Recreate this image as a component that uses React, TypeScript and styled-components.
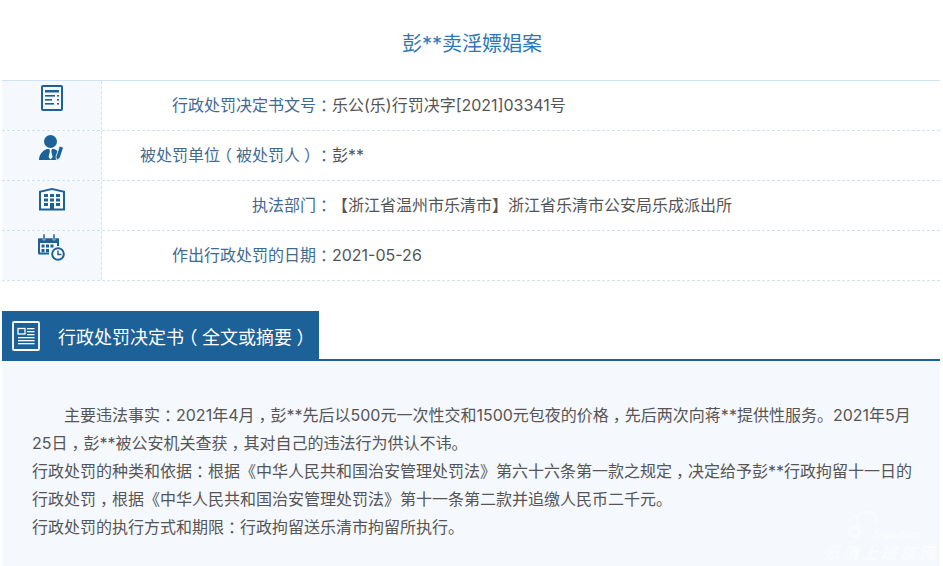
import React from "react";
import styled, { createGlobalStyle } from "styled-components";

const GlobalStyle = createGlobalStyle`
  html, body {
    margin: 0;
    padding: 0;
    background: #fff;
    overflow: hidden;
  }
  body {
    font-family: Inter, "Noto Sans CJK SC", sans-serif;
  }
`;

const BLUE = "#1d6199";

const DocIcon = () => (
  <svg width="22" height="26" viewBox="0 0 22 26">
    <rect x="1" y="1" width="20" height="24" rx="1" fill="none" stroke={BLUE} strokeWidth="2" />
    <rect x="4" y="5" width="14" height="2.5" fill={BLUE} />
    <rect x="4" y="10" width="10" height="1.6" fill={BLUE} />
    <rect x="16" y="10" width="2" height="1.6" fill={BLUE} />
    <rect x="4" y="14" width="7" height="1.6" fill={BLUE} />
    <rect x="16" y="14" width="2" height="1.6" fill={BLUE} />
    <rect x="4" y="18" width="9" height="1.6" fill={BLUE} />
    <rect x="16" y="18" width="2" height="1.6" fill={BLUE} />
  </svg>
);

const PersonIcon = () => (
  <svg width="25" height="26" viewBox="0 0 25 26">
    <circle cx="11.5" cy="6.500" r="6.500" fill={BLUE} />
    <path d="M0 25c0-5.500 3.500-9.500 8-11h7c2 .6 3.200 1.600 4 3l-2 8z" fill={BLUE} />
    <path d="M10.300 14h2.600l-.6 2.500 1.300 5.500-2 2.500-2-2.500 1.300-5.500z" fill="#fff" />
    <path d="M20.500 11l4 1.500-3.500 10.500-3.500 2.500-.5-3.800z" fill={BLUE} stroke="#f5f9fe" strokeWidth=".8" />
  </svg>
);

const BuildingIcon = () => (
  <svg width="26" height="23" viewBox="0 0 26 23">
    <path d="M0 22.500V3L13 0l13 3v19.500z" fill={BLUE} />
    <path d="M2 20.500V4.500L13 2l11 2.500v16z" fill="#fff" />
    <g fill={BLUE}>
      <rect x="5" y="6" width="4" height="3" />
      <rect x="11" y="6" width="4" height="3" />
      <rect x="17" y="6" width="4" height="3" />
      <rect x="5" y="10.500" width="4" height="3" />
      <rect x="11" y="10.500" width="4" height="3" />
      <rect x="17" y="10.500" width="4" height="3" />
      <rect x="5" y="15" width="4" height="3" />
      <rect x="11" y="15" width="4" height="7" />
      <rect x="17" y="15" width="4" height="3" />
    </g>
  </svg>
);

const CalendarIcon = () => (
  <svg width="27" height="27" viewBox="0 0 27 27">
    <path d="M1.500 4.500h18.500a1 1 0 0 1 1 1V12h-2V9H2v9.500h9v2H1.500a1.500 1.500 0 0 1-1.500-1.500V6a1.500 1.500 0 0 1 1.500-1.500z" fill={BLUE} />
    <rect x="0" y="4.500" width="21" height="4.500" fill={BLUE} />
    <rect x="5" y="0" width="2" height="6" fill={BLUE} stroke="#f5f9fe" strokeWidth=".5" />
    <rect x="15" y="0" width="2" height="6" fill={BLUE} stroke="#f5f9fe" strokeWidth=".5" />
    <g fill={BLUE}>
      <rect x="3.500" y="10.500" width="3" height="3" />
      <rect x="8" y="10.500" width="3" height="3" />
      <rect x="12.500" y="10.500" width="3" height="3" />
      <rect x="3.500" y="15" width="3" height="3" />
      <rect x="8" y="15" width="3" height="3" />
    </g>
    <circle cx="20" cy="20" r="5.800" fill="#fff" stroke={BLUE} strokeWidth="2" />
    <path d="M20 16.500V20.500h3.500" fill="none" stroke={BLUE} strokeWidth="1.500" />
  </svg>
);

const ArticleIcon = () => (
  <svg width="28" height="30" viewBox="0 0 28 30">
    <rect x="1" y="1" width="26" height="28" rx="1" fill="none" stroke="#fff" strokeWidth="1.800" />
    <rect x="6" y="7.500" width="7" height="5.500" fill="none" stroke="#fff" strokeWidth="1.300" />
    <g fill="#fff">
      <rect x="15" y="7" width="7.500" height="1.300" />
      <rect x="15" y="10" width="7.500" height="1.300" />
      <rect x="15" y="13" width="7.500" height="1.300" />
      <rect x="6" y="16" width="16.500" height="1.300" />
      <rect x="6" y="19" width="16.500" height="1.300" />
      <rect x="6" y="22" width="16.500" height="1.300" />
    </g>
  </svg>
);

const WatermarkLogo = () => (
  <svg width="44" height="32" viewBox="0 0 44 32" fill="none" stroke="#fff" strokeWidth="1.500" opacity=".6">
    <path d="M12 28c-7 0-9-5-5-8 4-3 9-2 9 2 0 4-4 6-4 6" strokeWidth="2.500" />
    <path d="M16 20c-5-5-5-14 3-17 8-2 14 3 14 11" />
    <path d="M14 12L6 2M11 13L2 8" strokeWidth="1" />
  </svg>
);

// 全角标点在原图里是居中的，单独包一层
const withPunct = (text: string) =>
  text.split(/([，：（）])/).map((part, i) =>
    i % 2 === 1 ? <Punct key={i}>{part}</Punct> : part
  );

const rows = [
  { icon: <DocIcon />, top: 4, label: "行政处罚决定书文号：", value: "乐公(乐)行罚决字[2021]03341号" },
  { icon: <PersonIcon />, top: 4, label: "被处罚单位（被处罚人）：", value: "彭**" },
  { icon: <BuildingIcon />, top: 7, label: "执法部门：", value: "【浙江省温州市乐清市】浙江省乐清市公安局乐成派出所" },
  { icon: <CalendarIcon />, top: 3, label: "作出行政处罚的日期：", value: "2021-05-26" },
];

export default function App() {
  return (
    <Page>
      <GlobalStyle />
      <Title>彭**卖淫嫖娼案</Title>
      <InfoTable>
        {rows.map((row, i) => (
          <InfoRow key={row.label} $first={i === 0}>
            <IconCell $top={row.top}>{row.icon}</IconCell>
            <Label>{withPunct(row.label)}</Label>
            <Value>{row.value}</Value>
          </InfoRow>
        ))}
      </InfoTable>
      <SectionBar>
        <SectionTab>
          <TabIcon>
            <ArticleIcon />
          </TabIcon>
          <TabTitle>{withPunct("行政处罚决定书（全文或摘要）")}</TabTitle>
        </SectionTab>
      </SectionBar>
      <Panel>
        <Lead>{withPunct("主要违法事实：2021年4月，彭**先后以500元一次性交和1500元包夜的价格，先后两次向蒋**提供性服务。2021年5月25日，彭**被公安机关查获，其对自己的违法行为供认不讳。")}</Lead>
        <Para>{withPunct("行政处罚的种类和依据：根据《中华人民共和国治安管理处罚法》第六十六条第一款之规定，决定给予彭**行政拘留十一日的行政处罚，根据《中华人民共和国治安管理处罚法》第十一条第二款并追缴人民币二千元。")}</Para>
        <Para>{withPunct("行政处罚的执行方式和期限：行政拘留送乐清市拘留所执行。")}</Para>
        <LogoMark>
          <WatermarkLogo />
          <LogoText>Sigu.com</LogoText>
        </LogoMark>
        <Watermark>乐清上班族网</Watermark>
      </Panel>
    </Page>
  );
}

const Page = styled.div`
  width: 943px;
  height: 566px;
  overflow: hidden;
  padding-left: 2px;
  box-sizing: border-box;
  background: #fff;
`;

const Punct = styled.span`
  display: inline-block;
  width: 1em;
  text-align: center;
  font-feature-settings: "halt";
  text-indent: 0;
`;

const Title = styled.h1`
  margin: 0;
  width: 940px;
  height: 78px;
  padding-top: 29px;
  box-sizing: border-box;
  text-align: center;
  font-size: 20px;
  line-height: 30px;
  font-weight: 400;
  color: #2f78b5;
`;

const InfoTable = styled.div`
  margin-top: 2px;
  width: 938px;
`;

const InfoRow = styled.div<{ $first: boolean }>`
  display: grid;
  grid-template-columns: 100px 230px 1fr;
  height: 50px;
  box-sizing: border-box;
  border-top: 1px ${(p) => (p.$first ? "solid" : "dashed")} #cfe3f3;
  font-size: 16px;
  &:last-child {
    height: 51px;
    border-bottom: 1px dashed #cfe3f3;
  }
`;

const IconCell = styled.div<{ $top: number }>`
  display: flex;
  justify-content: center;
  align-items: flex-start;
  padding-top: ${(p) => p.$top}px;
  background: #f5f9fe;
  border-right: 1px dashed #cfe3f3;
`;

const Label = styled.div`
  text-align: right;
  line-height: 48px;
  color: #3f6a92;
`;

const Value = styled.div`
  line-height: 48px;
  color: #555;
`;

const SectionBar = styled.div`
  margin-top: 30px;
  width: 938px;
  height: 50px;
  border-bottom: 2px solid ${BLUE};
  box-sizing: border-box;
`;

const SectionTab = styled.div`
  display: flex;
  align-items: center;
  width: 317px;
  height: 50px;
  background: ${BLUE};
`;

const TabIcon = styled.div`
  display: flex;
  justify-content: flex-start;
  width: 56px;
  padding-left: 10px;
  box-sizing: border-box;
`;

const TabTitle = styled.div`
  font-size: 18px;
  color: #fff;
  white-space: nowrap;
`;

const Panel = styled.div`
  position: relative;
  width: 938px;
  height: 205px;
  padding: 40px 26px 0 30px;
  box-sizing: border-box;
  background: #f5f8fd;
  font-size: 16px;
  line-height: 28px;
  color: #555;
`;

const Lead = styled.p`
  margin: 0;
  text-indent: 32px;
`;

const Para = styled.p`
  margin: 0;
`;

const LogoMark = styled.div`
  position: absolute;
  right: 20px;
  bottom: 25px;
  display: flex;
  align-items: flex-end;
`;

const LogoText = styled.span`
  margin-left: -14px;
  font-size: 10px;
  line-height: 14px;
  font-weight: 700;
  font-style: italic;
  color: #fff;
  opacity: 0.6;
`;

const Watermark = styled.div`
  position: absolute;
  right: 2px;
  bottom: 3px;
  font-size: 16px;
  font-weight: 700;
  font-style: italic;
  letter-spacing: 3px;
  line-height: 20px;
  color: #fff;
  opacity: 0.65;
`;
